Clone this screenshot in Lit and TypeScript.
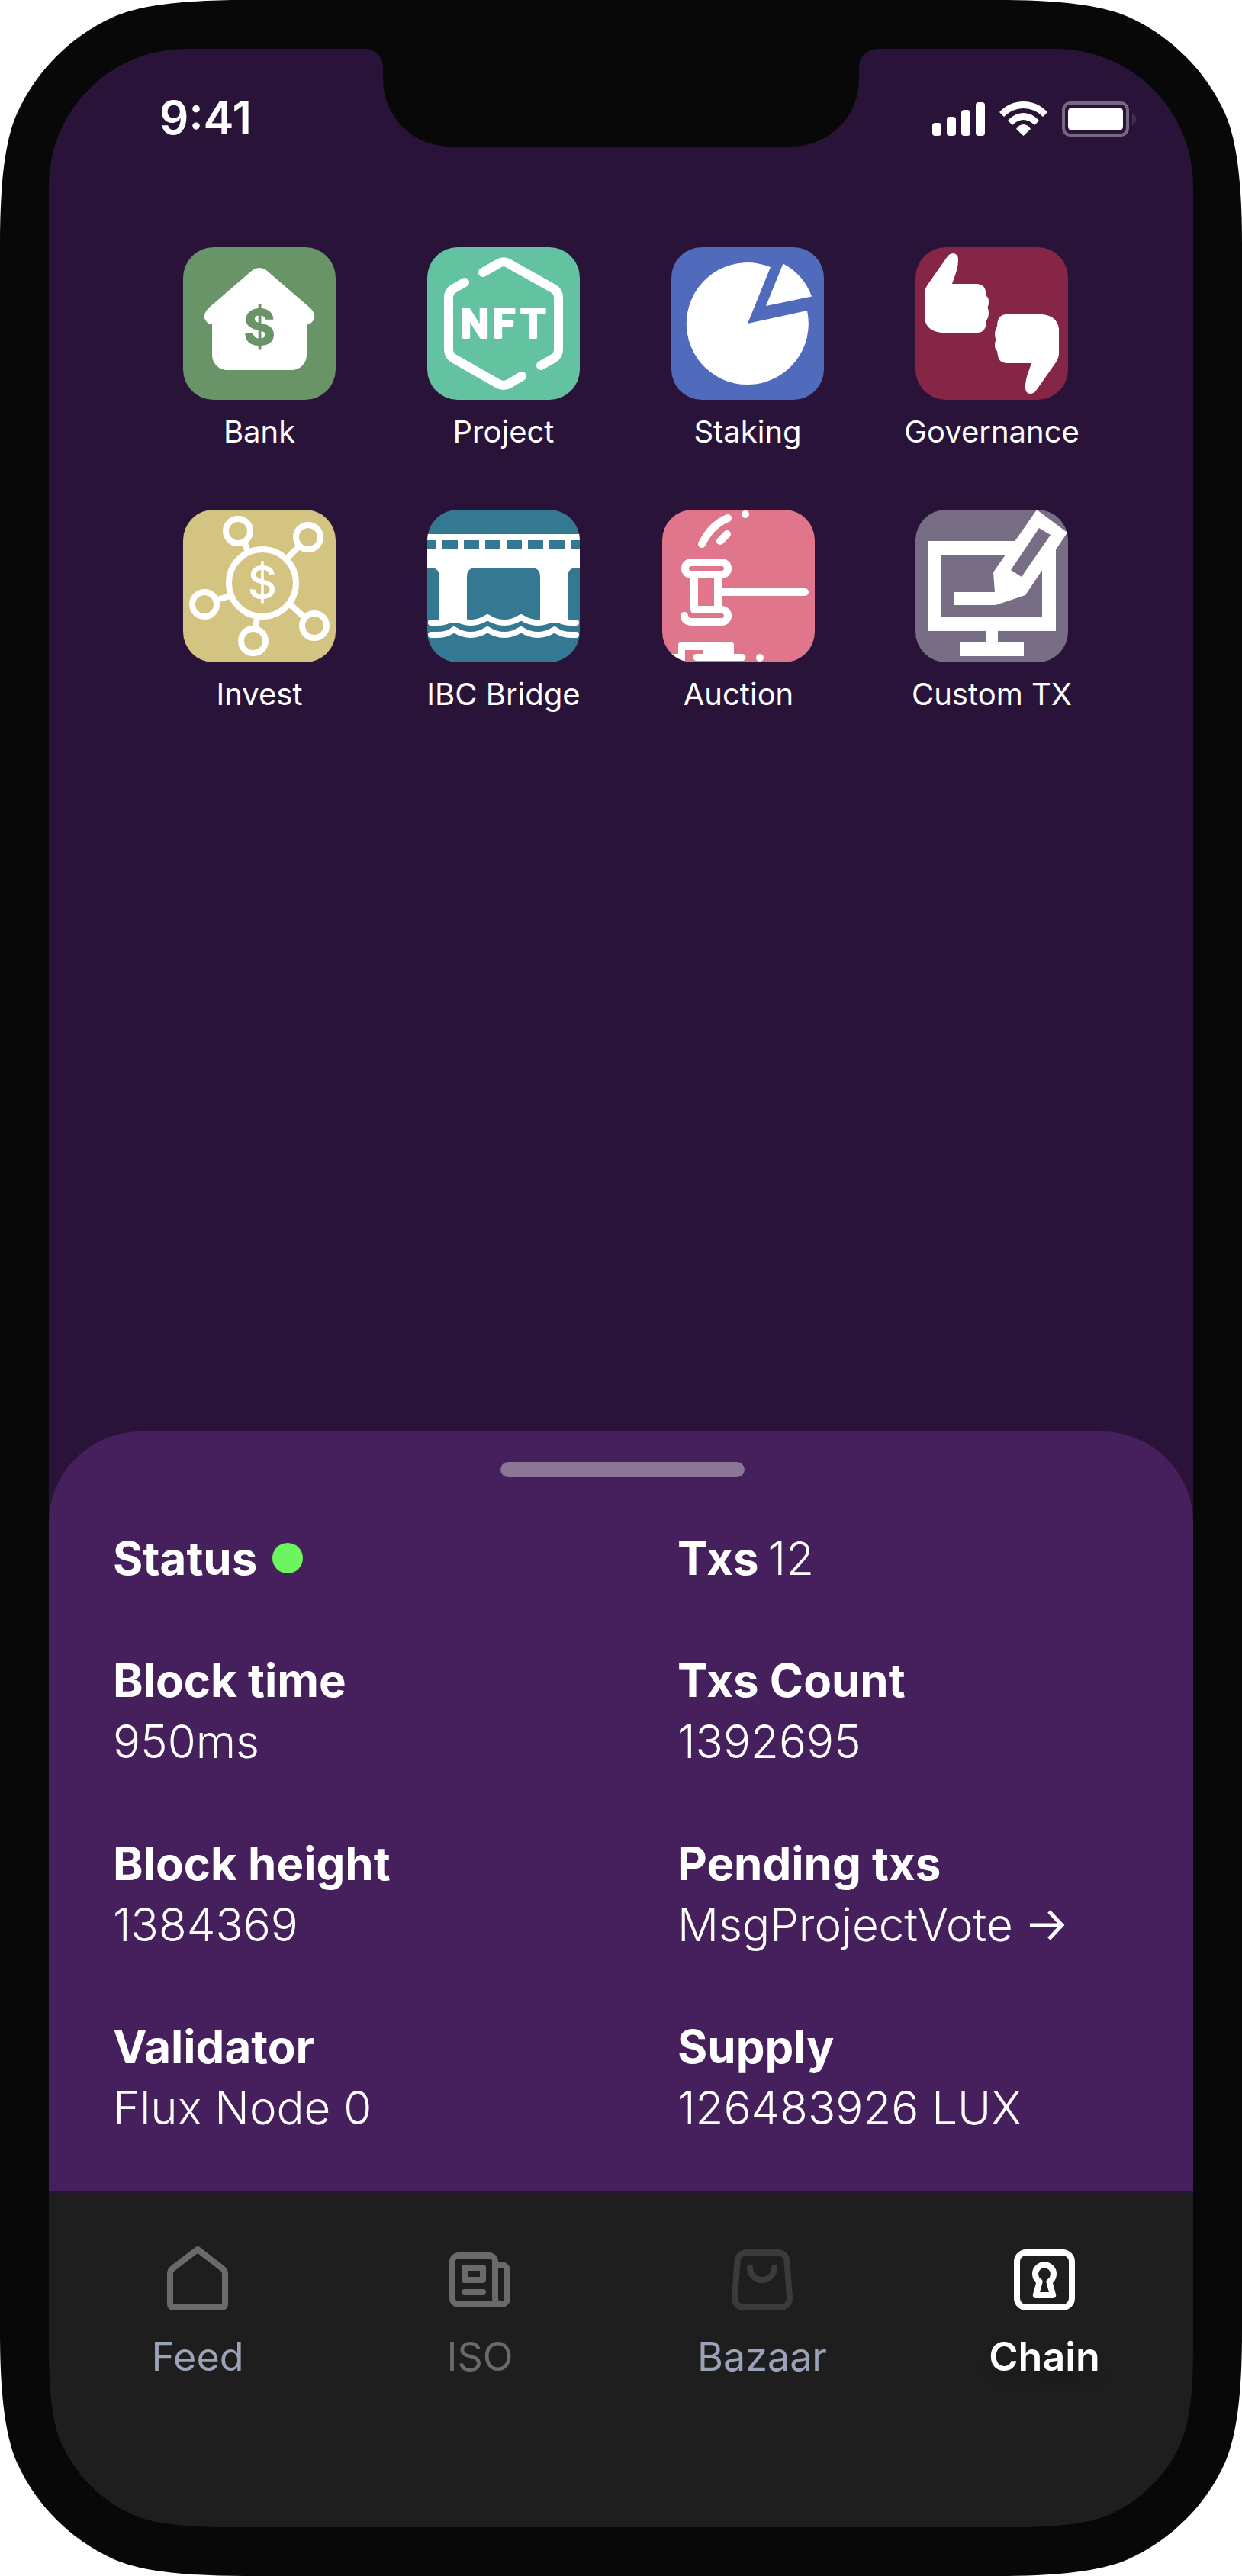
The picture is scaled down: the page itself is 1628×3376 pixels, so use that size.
import { LitElement, html, svg, css } from "lit";
import type { SVGTemplateResult } from "lit";
import { customElement } from "lit/decorators.js";

interface AppEntry {
  id: string;
  label: string;
  art: SVGTemplateResult;
}

interface Tab {
  id: string;
  label: string;
  art: SVGTemplateResult;
}

const thumb =
  "M42 12Q45 8 50 8Q56 9 56 16C56 28 52 36 48 48H81Q91 49 92 58L93 64Q96 66 96 71Q96 76 94.500 79Q96 82 96 87Q96 92 93 96Q93 111 82 112H34Q14 110 12 93V61Q12 55 16 49Z";
const wave =
  "M5 148H10Q25 149 35 141Q57 155 79 141Q101 155 123 141Q145 155 167 141Q177 149 192 148H195";

const apps: AppEntry[] = [
  {
    id: "bank",
    label: "Bank",
    art: svg`
      <path fill="#fff" d="M91 30Q100 24 109 30L167 80Q173 86 172 93Q170 100 162 101V141A20 20 0 0 1 142 161H58A20 20 0 0 1 38 141V101Q30 100 28 93Q27 86 33 80Z"/>
      <text class="sign heavy" x="100" y="128" text-anchor="middle">$</text>`,
  },
  {
    id: "project",
    label: "Project",
    art: svg`
      <g fill="none" stroke="#fff" stroke-width="12" stroke-linecap="round">
        <path d="M73 33L93 21.500Q100 17 107 21.500L165 54Q172 58 172 66V134Q172 142 165 146L149 155"/>
        <path d="M124 169L107 179Q100 183 93 179L35 146Q28 142 28 134V66Q28 58 35 54L49 46"/>
      </g>
      <text class="nft" x="44 86 123" y="118">NFT</text>`,
  },
  {
    id: "staking",
    label: "Staking",
    art: svg`
      <path fill="#fff" d="M100 100L130 26A80 80 0 1 0 178 83Z"/>
      <path fill="#fff" d="M124 77L146.500 21.500A80 80 0 0 1 184 64.500Z"/>`,
  },
  {
    id: "governance",
    label: "Governance",
    art: svg`
      <path fill="#fff" d=${thumb}/>
      <path fill="#fff" d=${thumb} transform="rotate(180 100 100)"/>`,
  },
  {
    id: "invest",
    label: "Invest",
    art: svg`
      <g fill="none" stroke="#fff" stroke-width="8">
        <circle cx="104" cy="96" r="44"/>
        <circle cx="72" cy="28" r="16"/>
        <circle cx="164" cy="36" r="16"/>
        <circle cx="28" cy="124" r="16"/>
        <circle cx="92" cy="172" r="16"/>
        <circle cx="172" cy="152" r="16"/>
        <path d="M80 42L85 55M152 48L137 63M44 118L62 113M95 156L97 141M139 123L159 141"/>
      </g>
      <text class="sign" x="104" y="117" text-anchor="middle">$</text>`,
  },
  {
    id: "bridge",
    label: "IBC Bridge",
    art: svg`
      <path fill="#fff" fill-rule="evenodd" d="M0 32H200V76H196Q184 76 184 88V148H148V88Q148 76 136 76H64Q52 76 52 88V148H16V88Q16 76 4 76H0ZM0 40V52H12V40ZM20 40V52H40V40ZM48 40V52H68V40ZM76 40V52H96V40ZM104 40V52H124V40ZM132 40V52H152V40ZM160 40V52H180V40ZM188 40V52H200V40Z"/>
      <g fill="none" stroke="#fff" stroke-width="8" stroke-linecap="round" stroke-linejoin="round">
        <path d=${wave}/>
        <path d=${wave} transform="translate(0 16)"/>
      </g>`,
  },
  {
    id: "auction",
    label: "Auction",
    art: svg`
      <g fill="none" stroke="#fff" stroke-width="10" stroke-linecap="round" stroke-linejoin="round">
        <path d="M86 11Q64 20 52 45M85 32L76 41M78 108H187"/>
        <rect x="30" y="69" width="56" height="16" rx="8"/>
        <path d="M42 88V131H78A8 8 0 0 1 78 147H39Q30 147 29 139M73 88V129"/>
      </g>
      <g fill="#fff">
        <circle cx="109" cy="6" r="5"/>
        <circle cx="128" cy="194" r="5"/>
        <path d="M10 189H21V177Q21 174 24 174H91Q94 174 94 177V189H105A4.500 4.500 0 0 1 105 198H45A4.500 4.500 0 0 1 45 189H53V184H30V196Q30 200 26 200H10Z"/>
      </g>`,
  },
  {
    id: "custom",
    label: "Custom TX",
    art: svg`
      <path fill="#fff" fill-rule="evenodd" d="M16 41H184V159H108V174H142V192H58V174H92V159H16ZM33 59V141H166V59Z"/>
      <path fill="#fff" d="M159 0L199 30L144 112L105 125H50V108H104L102 82Z"/>
      <path class="slot" d="M162 24L177 33L139 88L125 79Z"/>`,
  },
];

const tabs: Tab[] = [
  {
    id: "feed",
    label: "Feed",
    art: svg`<path d="M12 2L3.900 8.200Q3 8.900 3 10V20A1 1 0 0 0 4 21H20A1 1 0 0 0 21 20V10Q21 8.900 20.100 8.200Z"/>`,
  },
  {
    id: "iso",
    label: "ISO",
    art: svg`<path d="M19 20H5A2 2 0 0 1 3 18V6A2 2 0 0 1 5 4H15A2 2 0 0 1 17 6V18A2 2 0 0 0 21 18V9A2 2 0 0 0 19 7H17M7 8H13V12H7ZM7 16H13M19 20A2 2 0 0 0 21 18"/>`,
  },
  {
    id: "bazaar",
    label: "Bazaar",
    art: svg`<path d="M6.900 3H17.100A3 3 0 0 1 20.100 5.800L21 17.800A3 3 0 0 1 18 21H6A3 3 0 0 1 3 17.800L3.900 5.800A3 3 0 0 1 6.900 3ZM8 8A4 4 0 0 0 16 8"/>`,
  },
  {
    id: "chain",
    label: "Chain",
    art: svg`<rect x="3" y="3" width="18" height="18" rx="3"/><path d="M10.400 12.600A3 3 0 1 1 13.600 12.600L14.800 17H9.200Z"/>`,
  },
];

@customElement("app-root")
export class AppRoot extends LitElement {
  static styles = css`
    :host {
      display: block;
      font-family: Inter, "Liberation Sans", sans-serif;
      color: #fff;
    }
    a {
      color: inherit;
      text-decoration: none;
    }
    svg {
      display: block;
    }
    .device {
      position: relative;
      box-sizing: border-box;
      min-height: 100vh;
      padding: 64px;
      display: flex;
      flex-direction: column;
      background: #080808;
      overflow: hidden;
    }
    .screen {
      position: relative;
      flex: 1;
      display: flex;
      flex-direction: column;
      border-radius: 180px 180px 0 0;
      background: #2a1338;
      overflow: hidden;
    }
    .corner {
      position: absolute;
      width: 320px;
      height: 320px;
      fill: #fff;
    }
    .corner.inner {
      width: 236px;
      height: 236px;
      fill: #080808;
    }
    .tl {
      top: 0;
      left: 0;
    }
    .tr {
      top: 0;
      right: 0;
      transform: rotate(90deg);
    }
    .br {
      bottom: 0;
      right: 0;
      transform: rotate(180deg);
    }
    .bl {
      bottom: 0;
      left: 0;
      transform: rotate(270deg);
    }

    .status {
      display: grid;
      grid-template-columns: 1fr 672px 1fr;
      height: 128px;
    }
    .time {
      padding: 54px 0 0 145px;
      font-size: 60px;
      line-height: 72px;
      font-weight: 600;
    }
    .notch {
      width: 672px;
      height: 128px;
      fill: #080808;
    }
    .signals {
      justify-self: end;
      margin: 68px 74px 0 0;
      width: 268px;
      height: 48px;
    }

    .home {
      flex: 1;
      padding: 132px 152px 78px 164px;
    }
    .apps {
      display: grid;
      grid-template-columns: repeat(4, 1fr);
      gap: 78px 96px;
      margin: 0;
      padding: 0;
      list-style: none;
    }
    .app {
      display: grid;
      justify-content: center;
    }
    .app.auction {
      justify-content: start;
    }
    .app a {
      display: flex;
      flex-direction: column;
      align-items: center;
      gap: 18px;
      width: 200px;
      font-size: 40px;
      line-height: 48px;
      white-space: nowrap;
    }
    .tile {
      width: 200px;
      height: 200px;
      border-radius: 40px;
      background: var(--tint);
    }
    .bank {
      --tint: #689467;
    }
    .project {
      --tint: #63c3a1;
    }
    .staking {
      --tint: #506bbc;
    }
    .governance {
      --tint: #862646;
    }
    .invest {
      --tint: #d3c481;
    }
    .bridge {
      --tint: #357891;
    }
    .auction {
      --tint: #df768b;
    }
    .custom {
      --tint: #776e85;
    }
    .sign {
      font-size: 60px;
      font-weight: 500;
      fill: #fff;
    }
    .sign.heavy {
      font-size: 64px;
      font-weight: 800;
      fill: var(--tint);
    }
    .nft {
      font-family: Roboto, "Liberation Sans", sans-serif;
      font-size: 52px;
      font-weight: 500;
      fill: #fff;
      stroke: #fff;
      stroke-width: 4px;
      stroke-linejoin: round;
    }
    .slot {
      fill: var(--tint);
    }

    .panel {
      display: flex;
      flex-direction: column;
      padding: 40px 0 70px 84px;
      border-radius: 120px 120px 0 0;
      background: #46205c;
    }
    .handle {
      align-self: center;
      width: 320px;
      height: 20px;
      margin: 0 80px 66px 0;
      padding: 0;
      border: 0;
      border-radius: 10px;
      background: #8a7795;
    }
    .facts {
      display: grid;
      grid-template-columns: 1fr 1fr;
      gap: 80px 64px;
      margin: 0;
      font-size: 60px;
      line-height: 80px;
      font-weight: 350;
    }
    .facts dt {
      font-weight: 700;
    }
    .facts dd {
      margin: 0;
    }
    .inline {
      display: flex;
      align-items: center;
      gap: 12px;
    }
    .inline .lamp {
      width: 40px;
      height: 40px;
      margin-left: 8px;
      border-radius: 50%;
      background: #6cf55f;
    }
    .more {
      display: inline-flex;
      align-items: center;
      gap: 20px;
    }
    .arrow {
      width: 48px;
      height: 48px;
      fill: none;
      stroke: #fff;
      stroke-width: 5px;
    }

    .tabs {
      display: grid;
      grid-template-columns: repeat(4, 1fr);
      margin-top: 4px;
      padding: 64px 10px 190px;
      background: #1e1e1e;
      font-size: 52px;
      line-height: 66px;
    }
    .tab {
      display: flex;
      flex-direction: column;
      align-items: center;
      gap: 20px;
      color: #9ba3b8;
    }
    .glyph {
      width: 96px;
      height: 96px;
      fill: none;
      stroke: #6a6a6a;
      stroke-width: 2px;
      stroke-linecap: round;
      stroke-linejoin: round;
    }
    .tab.iso {
      color: #6a6a6a;
    }
    .tab.bazaar .glyph {
      stroke: #3b3b3b;
    }
    .tab.chain {
      color: #fff;
      font-weight: 600;
      text-shadow: 0 16px 16px rgba(0, 0, 0, 0.15);
    }
    .tab.chain .glyph {
      stroke: #fff;
    }
  `;

  private corner(place: string) {
    return html`<svg class="corner ${place}" viewBox="0 0 320 320" aria-hidden="true">
      <path d="M0 0H320C250 0 186 5 147 23A253 253 0 0 0 23 147C5 186 0 250 0 320Z" />
    </svg>`;
  }

  private statusBar() {
    return html`<div class="status">
      <div class="time">9:41</div>
      <svg class="notch" viewBox="0 0 672 128" aria-hidden="true">
        <path d="M0 0A24 24 0 0 1 24 24V40A88 88 0 0 0 112 128H560A88 88 0 0 0 648 40V24A24 24 0 0 1 672 0Z" />
      </svg>
      <svg class="signals" viewBox="0 0 268 48" role="img" aria-label="Signal, Wi-Fi and battery">
        <g fill="#fff">
          <rect x="0" y="29" width="12" height="17" rx="4" />
          <rect x="19" y="21" width="12" height="25" rx="4" />
          <rect x="38" y="12" width="12" height="34" rx="4" />
          <rect x="57" y="2" width="12" height="44" rx="4" />
          <path d="M88 15Q101 1 119.500 1T151 15L145 21Q134 10 119.500 10T94 21Z" />
          <path d="M99 26Q108 16 119.500 16T140 26L134 32Q127 25 119.500 25T105 32Z" />
          <path d="M110 37Q114 31 119.500 31T129 37L119.500 46Z" />
          <rect x="178" y="9" width="72" height="30" rx="5" />
        </g>
        <rect x="172" y="3" width="84" height="42" rx="9" fill="none" stroke="#776984" stroke-width="4" />
        <path d="M262 16Q267 19 267 24T262 32Z" fill="#3f304f" />
      </svg>
    </div>`;
  }

  private facts() {
    return html`<dl class="facts">
      <div class="inline"><dt>Status</dt><dd class="lamp" role="img" aria-label="Online"></dd></div>
      <div class="inline"><dt>Txs</dt><dd>12</dd></div>
      <div><dt>Block time</dt><dd>950ms</dd></div>
      <div><dt>Txs Count</dt><dd>1392695</dd></div>
      <div><dt>Block height</dt><dd>1384369</dd></div>
      <div>
        <dt>Pending txs</dt>
        <dd>
          <a class="more" href="#pending">MsgProjectVote<svg class="arrow" viewBox="0 0 48 48" aria-hidden="true">
            <path d="M2 25H44M27 7L44 25L27 43" />
          </svg></a>
        </dd>
      </div>
      <div><dt>Validator</dt><dd>Flux Node 0</dd></div>
      <div><dt>Supply</dt><dd>126483926 LUX</dd></div>
    </dl>`;
  }

  render() {
    return html`<div class="device">
      <div class="screen">
        ${this.statusBar()}
        <main class="home">
          <ul class="apps">
            ${apps.map(
              (app) => html`<li class="app ${app.id}">
                <a href="#${app.id}">
                  <svg class="tile" viewBox="0 0 200 200" aria-hidden="true">${app.art}</svg>
                  <span>${app.label}</span>
                </a>
              </li>`,
            )}
          </ul>
        </main>
        <section class="panel" aria-label="Chain status">
          <button class="handle" type="button" aria-label="Resize panel"></button>
          ${this.facts()}
        </section>
        <nav class="tabs">
          ${tabs.map(
            (tab) => html`<a class="tab ${tab.id}" href="#${tab.id}">
              <svg class="glyph" viewBox="0 0 24 24" aria-hidden="true">${tab.art}</svg>
              <span>${tab.label}</span>
            </a>`,
          )}
        </nav>
        ${["br", "bl"].map((place) => this.corner(`inner ${place}`))}
      </div>
      ${["tl", "tr", "br", "bl"].map((place) => this.corner(place))}
    </div>`;
  }
}
